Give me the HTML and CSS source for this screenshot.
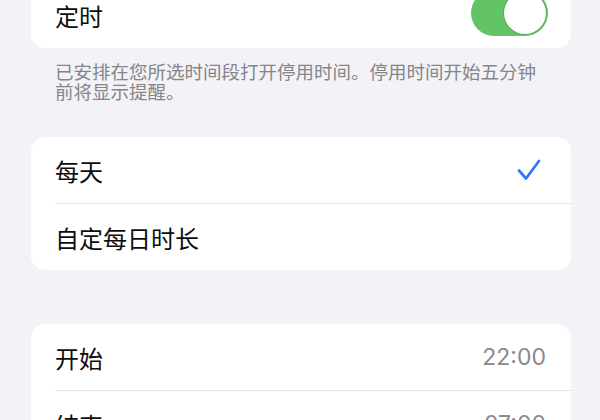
FILE: index.html
```html
<!DOCTYPE html>
<html lang="zh-CN">
<head>
<meta charset="utf-8">
<link rel="stylesheet" href="styles.css">
</head>
<body>
<div class="page">
  <div class="card card-first">
    <div class="row">
      <div class="row-inner">
        <span class="label">定时</span>
        <span class="switch"><span class="knob"></span></span>
      </div>
    </div>
  </div>
  <div class="footer">已安排在您所选时间段打开停用时间。停用时间开始五分钟前将显示提醒。</div>

  <div class="card card-second">
    <div class="row">
      <div class="row-inner check-row">
        <span class="label">每天</span>
        <svg class="check" width="24" height="22" viewBox="0 0 24 22">
          <path d="M2 11.5 L9 19.5 L22 2" fill="none" stroke="#3478f6" stroke-width="2.8" stroke-linecap="round" stroke-linejoin="round"/>
        </svg>
      </div>
    </div>
    <div class="row">
      <div class="row-inner">
        <span class="label">自定每日时长</span>
      </div>
    </div>
  </div>

  <div class="card card-third">
    <div class="row">
      <div class="row-inner time-row">
        <span class="label">开始</span>
        <span class="value">22:00</span>
      </div>
    </div>
    <div class="row">
      <div class="row-inner time-row">
        <span class="label">结束</span>
        <span class="value">07:00</span>
      </div>
    </div>
  </div>
</div>
</body>
</html>
```
FILE: styles.css
```css
html, body {
  margin: 0;
  padding: 0;
  background: #f2f2f7;
  overflow: hidden;
  height: 420px;
}
.page {
  padding: 0 29px 0 31px;
  font-family: "Inter", "Noto Sans CJK SC", sans-serif;
  color: #111;
}
.card {
  background: #fff;
  border-radius: 14px;
  overflow: hidden;
}
.card-first {
  margin-top: -18px;
}
.card-second {
  margin-top: 36px;
}
.card-third {
  margin-top: 54px;
}
.row {
  padding-left: 24px;
}
.row-inner {
  height: 66px;
  display: flex;
  align-items: center;
  justify-content: space-between;
  padding-right: 23px;
  box-sizing: border-box;
}
.row + .row .row-inner {
  border-top: 1px solid #e2e2e7;
  height: 67px;
}
.label {
  font-size: 24px;
  font-family: "Noto Sans CJK SC", sans-serif;
  color: #0d0d0d;
}
.footer {
  padding: 13px 24px 0 24px;
  font-family: "Noto Sans CJK SC", sans-serif;
  font-size: 18.5px;
  line-height: 20px;
  color: #85858a;
}
.switch {
  position: relative;
  width: 77px;
  height: 46px;
  border-radius: 23px;
  background: #62c466;
  margin-top: -4px;
}
.knob {
  position: absolute;
  right: 2px;
  top: 2px;
  width: 42px;
  height: 42px;
  border-radius: 50%;
  background: #fff;
  box-shadow: 0 0 0 1px rgba(70, 160, 75, 0.6);
}
.check-row {
  padding-right: 30px;
}
.check {
  display: block;
}
.time-row {
  padding-right: 25px;
}
.value {
  font-size: 23px;
  color: #8a8a8e;
  font-family: "Inter", sans-serif;
}
```
